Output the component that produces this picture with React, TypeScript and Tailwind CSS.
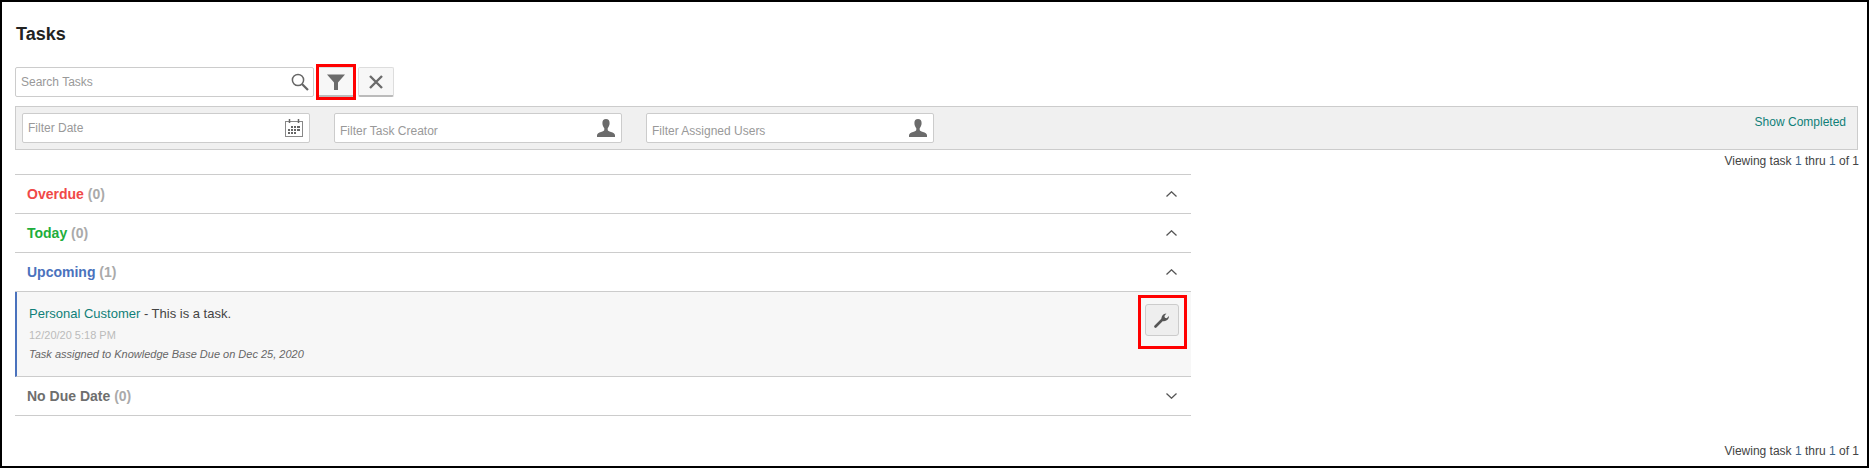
import React from 'react';

const FilterIcon = () => (
  <svg viewBox="0 0 18 16" className="w-[18px] h-[16px] fill-[#6b6b6b]">
    <path d="M0 0.5h18L11 8.5v7.5H7V8.5z" />
  </svg>
);

const CloseIcon = () => (
  <svg viewBox="0 0 14 14" className="w-[14px] h-[14px] stroke-[#6b6b6b]" strokeWidth="2.4" fill="none">
    <path d="M1 1l12 12M13 1L1 13" />
  </svg>
);

const SearchIcon = () => (
  <svg viewBox="0 0 18 18" className="w-[18px] h-[18px] stroke-[#666]" fill="none">
    <circle cx="7" cy="7" r="5.6" strokeWidth="1.5" />
    <path d="M11 11l6 6" strokeWidth="2.2" />
  </svg>
);

const UserIcon = () => (
  <svg viewBox="0 0 18 18" className="w-[18px] h-[18px] fill-[#6b6b6b]">
    <path d="M9 0c2.400 0 3.600 1.600 3.600 4 0 2.300-1 4.200-1.900 5.200v1.600c0 1 1.200 1.400 3.300 2.200 2.200.8 4 1.600 4 3.200V18H0v-1.800c0-1.600 1.800-2.400 4-3.200 2.100-.8 3.300-1.200 3.300-2.200V9.200C6.400 8.200 5.400 6.300 5.400 4 5.400 1.600 6.600 0 9 0z" />
  </svg>
);

const CalendarIcon = () => (
  <svg viewBox="0 0 18 18" className="w-[18px] h-[18px]" fill="none">
    <rect x="0.5" y="2.5" width="17" height="15" className="stroke-[#888]" />
    <path d="M4.500 0v4M13.500 0v4" className="stroke-[#666]" strokeWidth="1.500" />
    <path d="M6 7h2v2H6zM9 7h2v2H9zM12 7h3v2h-3zM3 10h2v2H3zM6 10h2v2H6zM9 10h2v2H9zM12 10h3v2h-3zM3 13h2v2H3zM6 13h2v2H6zM9 13h2v2H9z" className="fill-[#666]" />
  </svg>
);

const WrenchIcon = () => (
  <svg viewBox="0 0 16 16" className="w-[16px] h-[16px]" fill="none">
    <path d="M1.500 14.500L8.500 7.500" className="stroke-[#555]" strokeWidth="2.600" strokeLinecap="round" />
    <path d="M7.800 8.200C6.800 5.600 8.200 1.800 12.400 1.500L10.400 4l.5 1.800 1.800.5 2.300-2.200c.2 3.700-3.500 5.700-6.200 4.900z" className="fill-[#555]" />
  </svg>
);

const Chevron = ({ up }: { up: boolean }) => (
  <span className="w-[16px] h-[16px] flex items-center justify-center">
    <svg viewBox="0 0 11 6" className="w-[11px] h-[6px] stroke-[#555]" strokeWidth="1.300" fill="none">
      <path d={up ? 'M0.500 5.500L5.500 0.800l5 4.700' : 'M0.500 0.500L5.500 5.200l5-4.700'} />
    </svg>
  </span>
);

const FilterField = ({ placeholder, icon, textOffset }: { placeholder: string; icon: React.ReactNode; textOffset: string }) => (
  <div className="w-[288px] h-[30px] flex items-center bg-white border border-[#ccc] rounded-[2px] pl-[5px] pr-[6px]">
    <input placeholder={placeholder} className={`flex-1 min-w-0 outline-none text-[12px] placeholder:text-[#999] ${textOffset}`} />
    <span className="flex-none -mt-[1px]">{icon}</span>
  </div>
);

const sections = [
  { title: 'Overdue', count: 0, color: 'text-[#f04848]', open: true },
  { title: 'Today', count: 0, color: 'text-[#1eae3c]', open: true },
  { title: 'Upcoming', count: 1, color: 'text-[#4a72bd]', open: true },
  { title: 'No Due Date', count: 0, color: 'text-[#6e6e6e]', open: false },
];

const Paging = () => (
  <p className="text-[12px] leading-[14px] text-[#444] text-right">
    Viewing task <span className="text-[#3b6488]">1</span> thru <span className="text-[#3b6488]">1</span> of 1
  </p>
);

export default function App() {
  return (
    <div className="relative h-[468px] border-2 border-black bg-white pl-[13px] pr-[9px] font-['Liberation_Sans',Arial,sans-serif] text-[#444]">
      <h1 className="pt-[22px] text-[18px] leading-[20px] font-bold text-[#222] pl-[1px]">Tasks</h1>

      <div className="mt-[23px] flex items-center h-[30px]">
        <div className="w-[299px] h-[30px] flex items-center border border-[#ccc] rounded-[2px] pl-[5px] pr-[4px]">
          <input placeholder="Search Tasks" className="flex-1 min-w-0 outline-none text-[12px] placeholder:text-[#999]" />
          <SearchIcon />
        </div>
        <button className="ml-[4px] w-[36px] h-[30px] flex items-center justify-center bg-[#f7f7f7] border border-[#ddd] border-b-[2px] border-b-[#bbb] rounded-[2px]">
          <FilterIcon />
        </button>
        <button className="ml-[4px] w-[36px] h-[30px] flex items-center justify-center bg-[#f7f7f7] border border-[#ddd] border-b-[2px] border-b-[#bbb] rounded-[2px]">
          <CloseIcon />
        </button>
      </div>

      <div className="mt-[9px] h-[44px] bg-[#f0f0f0] border border-[#ccc] flex items-center pl-[6px] pr-[11px]">
        <FilterField placeholder="Filter Date" icon={<CalendarIcon />} textOffset="-mt-[1px]" />
        <div className="ml-[24px]">
          <FilterField placeholder="Filter Task Creator" icon={<UserIcon />} textOffset="mt-[6px]" />
        </div>
        <div className="ml-[24px]">
          <FilterField placeholder="Filter Assigned Users" icon={<UserIcon />} textOffset="mt-[6px]" />
        </div>
        <a className="ml-auto self-start mt-[8px] text-[12px] leading-[14px] text-[#0f7f78]">Show Completed</a>
      </div>

      <div className="mt-[4px] -mr-[1px]">
        <Paging />
      </div>

      <div className="mt-[6px] w-[1176px] border-t border-[#ccc]">
        {sections.map((s) => (
          <div key={s.title}>
            <div className="h-[39px] flex items-center justify-between border-b border-[#ccc] pl-[12px] pr-[12px]">
              <span className="text-[14px] font-bold">
                <span className={s.color}>{s.title}</span> <span className="text-[#aaa]">({s.count})</span>
              </span>
              <Chevron up={s.open} />
            </div>
            {s.title === 'Upcoming' && (
              <div className="h-[85px] flex justify-between bg-[#f7f7f7] border-l-2 border-l-[#4a72bd] border-b border-b-[#ccc] pl-[12px] pr-[12px]">
                <div className="pt-[13px]">
                  <p className="text-[13px] leading-[18px]">
                    <a className="text-[#0f7f78]">Personal Customer</a> - This is a task.
                  </p>
                  <p className="mt-[5px] text-[11px] leading-[14px] text-[#bbb]">12/20/20 5:18 PM</p>
                  <p className="mt-[5px] text-[11px] leading-[14px] italic text-[#666]">
                    Task assigned to Knowledge Base Due on Dec 25, 2020
                  </p>
                </div>
                <button className="relative mt-[12px] w-[34px] h-[32px] flex items-center justify-center bg-[#eee] border border-[#ccc] rounded-[3px]">
                  <WrenchIcon />
                  {/* red callout */}
                  <span className="absolute -left-[8px] -top-[10px] w-[49px] h-[54px] border-[3px] border-[#f00]" />
                </button>
              </div>
            )}
          </div>
        ))}
      </div>

      <div className="absolute right-[8px] bottom-[8px]">
        <Paging />
      </div>

      {/* red callout on the filter button */}
      <span className="absolute left-[314px] top-[62px] w-[40px] h-[36px] border-[3px] border-[#f00]" />
    </div>
  );
}
